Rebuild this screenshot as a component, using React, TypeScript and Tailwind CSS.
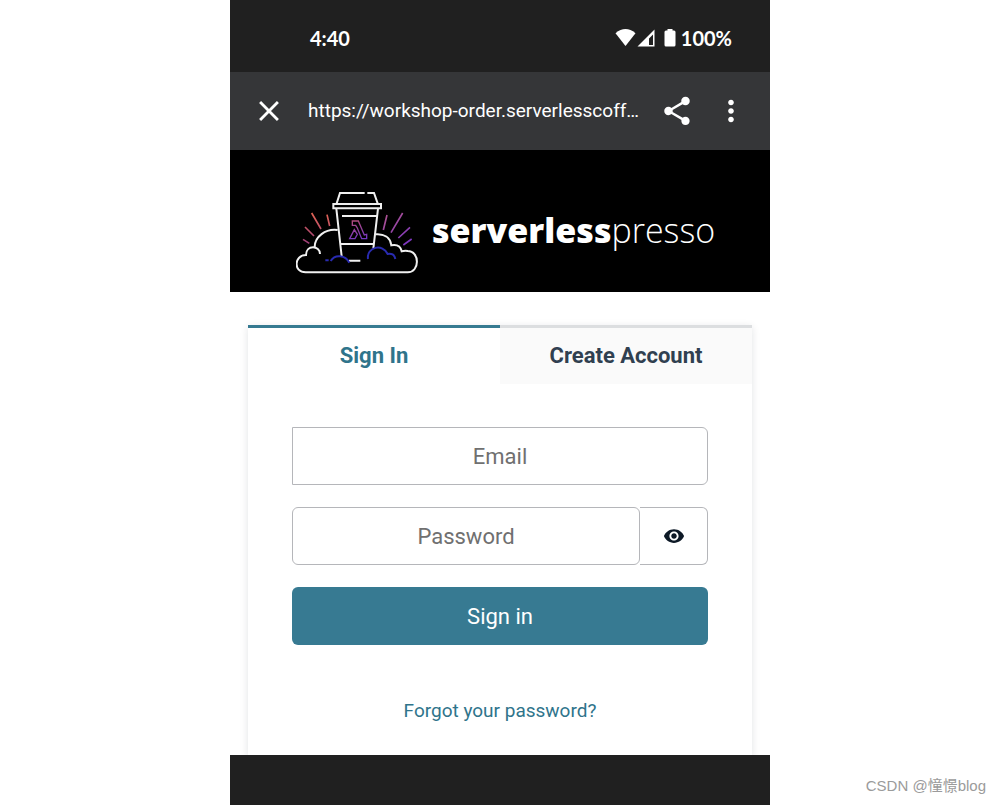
import React, { useState } from "react";
import { MdClose, MdMoreVert, MdShare, MdVisibility } from "react-icons/md";

const StatusIcons = () => (
  <svg className="w-[62px] h-5" viewBox="0 0 62 20" fill="white" aria-hidden="true">
    {/* Wifi */}
    <path d="M0.5 5.2Q10.5 -3 20.5 5.2L10.5 18z" />
    {/* Signal */}
    <path fillRule="evenodd" d="M39.5 1.5V18.5H22.5zM38 6.5L34 10.5V17H38z" />
    {/* Battery */}
    <path d="M52.500 1h5v1.500h1.500q1.500 0 1.500 1.500v13q0 1.500 -1.500 1.500h-8q-1.500 0 -1.500 -1.500v-13q0 -1.500 1.500 -1.500h1.500z" />
  </svg>
);

const CoffeeLogo = () => (
  <svg
    className="w-[122px] h-[85px] shrink-0"
    viewBox="33 30 366 255"
    fill="none"
    stroke="#f0f0f0"
    strokeWidth="6"
    aria-hidden="true"
  >
    <defs>
      <linearGradient id="rays" gradientUnits="userSpaceOnUse" x1="60" y1="90" x2="60" y2="195">
        <stop offset="0" stopColor="#e8674f" />
        <stop offset="1" stopColor="#9a3d7c" />
      </linearGradient>
      <linearGradient id="raysRight" gradientUnits="userSpaceOnUse" x1="300" y1="95" x2="370" y2="195">
        <stop offset="0" stopColor="#b0548c" />
        <stop offset="1" stopColor="#7b35c4" />
      </linearGradient>
      <linearGradient id="lambda" gradientUnits="userSpaceOnUse" x1="215" y1="120" x2="225" y2="180">
        <stop offset="0" stopColor="#b34c7c" />
        <stop offset="1" stopColor="#7135c4" />
      </linearGradient>
    </defs>

    {/* Cup */}
    <path d="M155 70L165 39H239M247 39H267L278 70" />
    <path d="M145 72H288V85H145z" />
    <path d="M154 86L170 229M279 86L265 206" />
    <path d="M171 108H276M165 192H267M192 242H226" />

    {/* Cloud */}
    <path d="M158 150C122 145 88 170 89 203M105 222C105 196 63 193 63 225C27 225 24 277 62 277H368C405 277 405 213 368 213Q360 211 350 214Q345 191 319 196C316 172 297 161 272 163" />
    <g stroke="#292bb0">
      <path d="M121 241H131M137 243C150 222 181 225 193 248" />
      <path d="M249 237C244 200 294 190 308 222Q328 219 331 237" />
    </g>

    {/* Rays */}
    <g strokeWidth="5" stroke="url(#rays)">
      <path d="M80 99L108 147M60 141L87 168M126 104L134 138M54 178L73 190" />
    </g>
    <g strokeWidth="5" stroke="url(#raysRight)">
      <path d="M306 105L295 150M353 99L318 158M375 142L340 174M380 177L355 195" />
    </g>

    {/* Lambda */}
    <path
      stroke="url(#lambda)"
      strokeWidth="4"
      d="M202 123H220L238 165L245 163V176H230L217 144L212 136H202zM208 149L217 163L210 176H194z"
    />
  </svg>
);

const App = () => {
  const [showPassword, setShowPassword] = useState(false);

  return (
    <div className="relative min-h-screen bg-white font-['Roboto',sans-serif]">
      <div className="mx-auto flex min-h-screen w-full max-w-[540px] flex-col">
        {/* Status bar */}
        <div className="flex h-[72px] items-center justify-between bg-[#202020] pt-1 pr-[38px] pl-20 font-['Lato',sans-serif] text-xl font-bold text-white">
          <span>4:40</span>
          <div className="flex items-center gap-1">
            <StatusIcons />
            <span>100%</span>
          </div>
        </div>

        {/* Browser toolbar */}
        <div className="flex h-[78px] items-center bg-[#353638] px-[22px] text-white">
          <button aria-label="Close" className="mr-[22px]">
            <MdClose size={34} />
          </button>
          <span className="flex-1 truncate text-[19px]">https://workshop-order.serverlesscoff…</span>
          <button aria-label="Share" className="mr-5">
            <MdShare size={34} />
          </button>
          <button aria-label="More options">
            <MdMoreVert size={34} />
          </button>
        </div>

        {/* Banner */}
        <header className="flex items-center gap-3.5 bg-black pt-10 pb-[17px] pl-[66px]">
          <CoffeeLogo />
          <h1 className="pb-1 font-['Open_Sans',sans-serif] text-[34px] text-white">
            <span className="font-extrabold">serverless</span>
            <span className="font-light">presso</span>
          </h1>
        </header>

        {/* Sign in card */}
        <main className="flex flex-1 flex-col overflow-hidden px-[18px] pt-[33px]">
          <div className="flex-1 shadow-[0_2px_8px_rgba(13,26,38,0.12)]">
            <div role="tablist" className="grid grid-cols-2 text-[22px] leading-7 font-bold">
              <button
                role="tab"
                aria-selected="true"
                className="border-t-3 border-[#367a91] bg-white py-3.5 text-[#2f748b]"
              >
                Sign In
              </button>
              <button
                role="tab"
                aria-selected="false"
                className="border-t-3 border-[#dcdee0] bg-[#fafafa] py-3.5 text-[#304050]"
              >
                Create Account
              </button>
            </div>

            <form
              className="flex flex-col gap-[22px] px-11 pt-[43px] text-[22px]"
              onSubmit={(e) => e.preventDefault()}
            >
              <input
                type="email"
                aria-label="Email"
                placeholder="Email"
                className="h-[58px] w-full rounded-r-md border border-[#b5b6ba] text-center placeholder:text-[#707070]"
              />
              <div className="flex">
                <input
                  type={showPassword ? "text" : "password"}
                  aria-label="Password"
                  placeholder="Password"
                  className="h-[58px] min-w-0 flex-1 rounded-md border border-[#b5b6ba] text-center placeholder:text-[#707070]"
                />
                <button
                  type="button"
                  aria-label="Show password"
                  onClick={() => setShowPassword(!showPassword)}
                  className="flex w-[68px] items-center justify-center rounded-r-md border border-l-0 border-[#b5b6ba] text-[#0d1926]"
                >
                  <MdVisibility size={22} />
                </button>
              </div>
              <button type="submit" className="h-[58px] rounded-md bg-[#377a92] text-white">
                Sign in
              </button>
            </form>

            <div className="pt-[52px] pb-6 text-center">
              <a href="#forgot" className="text-[19px] text-[#2f748b]">
                Forgot your password?
              </a>
            </div>
          </div>
        </main>

        {/* Navigation bar */}
        <div className="h-[50px] bg-[#202020]" />
      </div>

      <span className="absolute right-3.5 bottom-2 font-['Liberation_Sans','Noto_Sans_CJK_SC',sans-serif] text-[15px] text-[#9b9b9b]">
        CSDN @憧憬blog
      </span>
    </div>
  );
};

export default App;
